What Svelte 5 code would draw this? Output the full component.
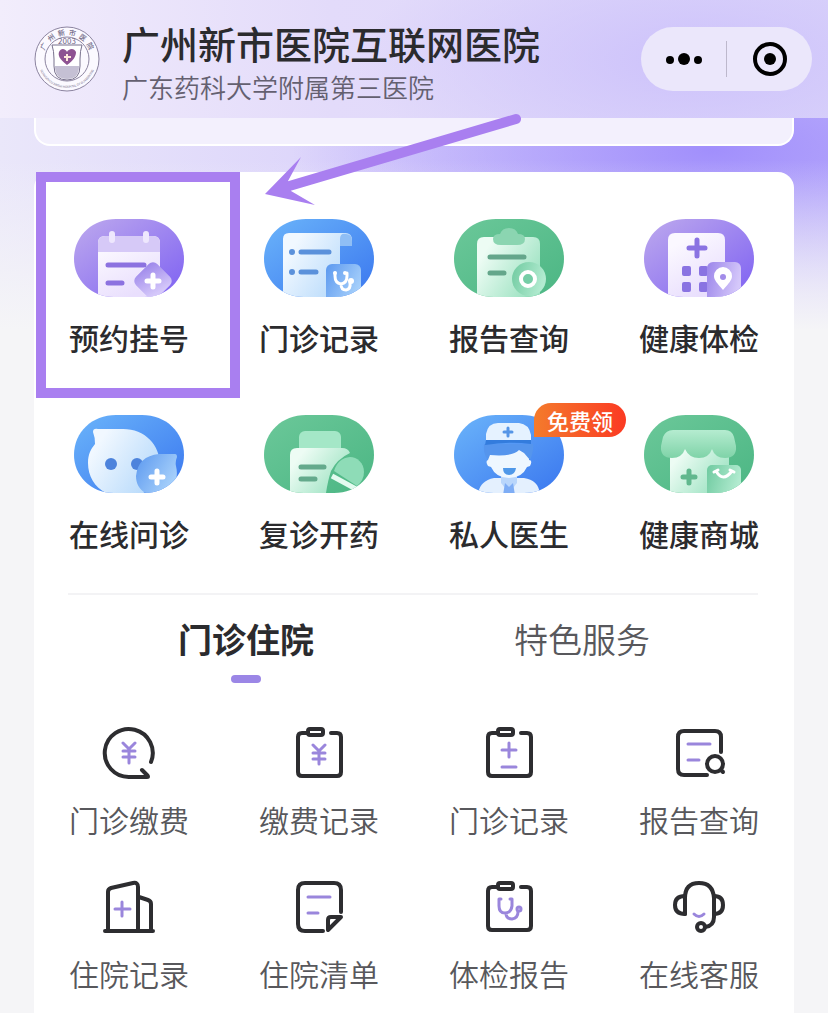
<script lang="ts">
  type Service = { name: string; icon: string; tag?: string; marked?: boolean };

  const services: Service[] = [
    { name: "预约挂号", icon: "calendar", marked: true },
    { name: "门诊记录", icon: "record" },
    { name: "报告查询", icon: "report" },
    { name: "健康体检", icon: "checkup" },
    { name: "在线问诊", icon: "chat" },
    { name: "复诊开药", icon: "medicine" },
    { name: "私人医生", icon: "doctor", tag: "免费领" },
    { name: "健康商城", icon: "shop" },
  ];

  const tabs = ["门诊住院", "特色服务"];
  let activeTab = $state(0);

  const tools: Service[] = [
    { name: "门诊缴费", icon: "pay" },
    { name: "缴费记录", icon: "bill" },
    { name: "门诊记录", icon: "visits" },
    { name: "报告查询", icon: "search" },
    { name: "住院记录", icon: "ward" },
    { name: "住院清单", icon: "list" },
    { name: "体检报告", icon: "exam" },
    { name: "在线客服", icon: "support" },
  ];
</script>

<!-- gradients shared by the service icons -->
<svg class="defs" aria-hidden="true">
  <defs>
    <clipPath id="pill">
      <path d="M0 40C0 17 18 0 42 0H68C92 0 110 17 110 40 110 60 94 78 70 78H40C16 78 0 60 0 40Z" />
    </clipPath>
    <linearGradient id="purple" x2="1" y2="1">
      <stop offset="0.1" stop-color="#b7a2ee" /><stop offset="0.9" stop-color="#8468f2" />
    </linearGradient>
    <linearGradient id="blue" x2="1" y2="1">
      <stop offset="0.1" stop-color="#66aef9" /><stop offset="0.9" stop-color="#3f7df0" />
    </linearGradient>
    <linearGradient id="green" x2="1" y2="1">
      <stop offset="0.1" stop-color="#68c697" /><stop offset="0.9" stop-color="#4fb886" />
    </linearGradient>
    <linearGradient id="whitePurple" x2="0.5" y2="1">
      <stop offset="0.2" stop-color="#fbf8ff" /><stop offset="1" stop-color="#e9dffd" />
    </linearGradient>
    <linearGradient id="whiteBlue" x2="1" y2="0.6">
      <stop offset="0.2" stop-color="#f1f8ff" /><stop offset="1" stop-color="#b9dbfb" />
    </linearGradient>
    <linearGradient id="whiteGreen" x2="1" y2="0.6">
      <stop offset="0.2" stop-color="#edfcf4" /><stop offset="1" stop-color="#9fe3c3" />
    </linearGradient>
    <linearGradient id="badgePurple" x2="1" y2="0.3">
      <stop offset="0" stop-color="#9b85ea" /><stop offset="1" stop-color="#d5c8fa" />
    </linearGradient>
    <linearGradient id="badgeBlue" x2="1" y2="0.6">
      <stop offset="0" stop-color="#5b98ef" /><stop offset="1" stop-color="#a9d2fb" />
    </linearGradient>
    <linearGradient id="badgeGreen" x2="1" y2="0.3">
      <stop offset="0" stop-color="#6fcaa0" /><stop offset="1" stop-color="#b2ebd0" />
    </linearGradient>
    <linearGradient id="awning" x2="0" y2="1">
      <stop offset="0" stop-color="#b5ecd0" /><stop offset="1" stop-color="#7fd3a8" />
    </linearGradient>
  </defs>
</svg>

{#snippet serviceIcon(icon: string)}
  <svg class="service-icon" viewBox="0 0 110 78" aria-hidden="true">
    <g clip-path="url(#pill)">
      {#if icon === "calendar"}
        <rect width="110" height="78" fill="url(#purple)" />
        <path d="M24 78V24q0-7 7-7H79q7 0 7 7V78Z" fill="url(#whitePurple)" />
        <path d="M24 33V24q0-7 7-7H79q7 0 7 7V33Z" fill="#d6c9f7" />
        <path d="M38 15V21M72 15V21" stroke="#eee7fd" stroke-width="6" stroke-linecap="round" />
        <path d="M34 46H70M34 64H48" stroke="#8c72e0" stroke-width="5" stroke-linecap="round" />
        <rect x="64" y="47" width="30" height="30" rx="6" transform="rotate(45 79 62)" fill="url(#badgePurple)" />
        <path d="M73 62H85M79 56V68" stroke="#fff" stroke-width="5" stroke-linecap="round" />
      {:else if icon === "record"}
        <rect width="110" height="78" fill="url(#blue)" />
        <path d="M19 78V20q0-6 6-6H81q7 0 7 7v5H76V78Z" fill="url(#whiteBlue)" />
        <path d="M76 27V20q0-6 6-5 6 0 6 7v5Z" fill="#8fbef5" />
        <circle cx="28" cy="33" r="3" fill="#5b91db" /><circle cx="28" cy="53" r="3" fill="#5b91db" />
        <path d="M37 33H65M37 53H52" stroke="#5b91db" stroke-width="5" stroke-linecap="round" />
        <rect x="62" y="45" width="35" height="40" rx="6" fill="url(#badgeBlue)" />
        <path d="M71 54v3q0 7 6 8 6-1 6-8v-3M77 65q0 6 5 6 5-1 4-7" fill="none" stroke="#fff" stroke-width="3" stroke-linecap="round" />
        <circle cx="71" cy="54" r="2" fill="#fff" /><circle cx="81" cy="54" r="2" fill="#fff" />
        <circle cx="87" cy="62" r="3" fill="#fff" />
      {:else if icon === "report"}
        <rect width="110" height="78" fill="url(#green)" />
        <path d="M23 78V25q0-7 7-7H79q7 0 7 7V78Z" fill="url(#whiteGreen)" />
        <path d="M39 20q0-5 7-5 2-6 9-6t9 6q7 0 7 5 0 6-8 6H47q-8 0-8-6Z" fill="#8bd5b1" />
        <path d="M36 38H70M36 54H50" stroke="#64a68b" stroke-width="5" stroke-linecap="round" />
        <circle cx="75" cy="60" r="17" fill="url(#badgeGreen)" />
        <circle cx="74" cy="60" r="7" fill="#75cda6" stroke="#fff" stroke-width="4" />
      {:else if icon === "checkup"}
        <rect width="110" height="78" fill="url(#purple)" />
        <path d="M24 78V21q0-7 7-7H74q7 0 7 7V78Z" fill="url(#whitePurple)" />
        <path d="M45 29H61M53 21V37" stroke="#8a73e2" stroke-width="5" stroke-linecap="round" />
        <g fill="#8a73e2">
          <rect x="38" y="47" width="9" height="10" rx="2" /><rect x="55" y="47" width="9" height="10" rx="2" />
          <rect x="38" y="63" width="9" height="10" rx="2" /><rect x="55" y="63" width="9" height="10" rx="2" />
        </g>
        <rect x="63" y="43" width="34" height="42" rx="6" fill="url(#badgePurple)" />
        <path d="M79 71C73 64 70 61 70 57a9 9 0 0 1 18 0C88 61 85 64 79 71Z" fill="#fff" />
        <circle cx="79" cy="58" r="3" fill="#a28ce9" />
      {:else if icon === "chat"}
        <rect width="110" height="78" fill="url(#blue)" />
        <path d="M19 17q0-4 5-3H49C71 14 86 30 86 50S72 82 50 82 14 67 14 48C14 39 17 34 21 29Q21 22 19 17Z" fill="url(#whiteBlue)" />
        <circle cx="37" cy="49" r="6" fill="#4d83dc" /><circle cx="63" cy="49" r="6" fill="#4d83dc" />
        <path d="M101 39q2 0 2 3-2 5-1 9C106 67 96 80 82 80S62 71 62 61q2-20 23-22Z" fill="url(#badgeBlue)" />
        <path d="M77 62H89M83 56V68" stroke="#fff" stroke-width="5" stroke-linecap="round" />
      {:else if icon === "medicine"}
        <rect width="110" height="78" fill="url(#green)" />
        <rect x="35" y="16" width="42" height="30" rx="6" fill="#a4e7c7" />
        <path d="M26 78V40q0-7 7-7H78q6 0 8 5-13 6-19 18-3 9-5 22Z" fill="url(#whiteGreen)" />
        <path d="M37 52H60M37 64H51" stroke="#64aa8c" stroke-width="5" stroke-linecap="round" />
        <path d="M70 56Q74 43 86 42C93 42 100 48 100 57q0 8-7 14Z" fill="#8edcb7" />
        <path d="M68 61 92 74" stroke="#e5fbf0" stroke-width="5" />
      {:else if icon === "doctor"}
        <rect width="110" height="78" fill="url(#blue)" />
        <path d="M24 80q1-14 16-17H70q15 2 16 17Z" fill="#e4f0fe" />
        <path d="M47 59H63V68L55 78 47 68Z" fill="#b9d6fb" />
        <path d="M51 68 55 72 59 68 61 80H49Z" fill="#7eadf5" />
        <path d="M34 35H75V45q4 0 1 6l-3 1Q68 63 55 63T37 52l-3-1q-3-5 0-6Z" fill="#eef7ff" />
        <path d="M30 29H79q1 7-3 16L70 38 65 35Q58 42 36 40L34 45Q29 39 30 29Z" fill="#5595ed" />
        <path d="M32 27V19Q34 8 44 8H65Q75 9 77 20V27Z" fill="#e5f2ff" />
        <path d="M32 25H77V29Q55 26 31 30Z" fill="#337cdd" />
        <path d="M50 17H58M54 13V21" stroke="#5595e6" stroke-width="3" stroke-linecap="round" />
        <path d="M49 53H62Q61 60 55 60T49 53Z" fill="#4f98e9" />
      {:else}
        <rect width="110" height="78" fill="url(#green)" />
        <path d="M26 32H85V78H26Z" fill="url(#whiteGreen)" />
        <path d="M19 22Q22 15 29 15H81Q88 15 90 22L92 31Q93 43 81 43 71 43 68 34 65 43 55 43T41 34Q38 43 28 43 16 43 17 31Z" fill="url(#awning)" />
        <path d="M39 62H51M45 56V68" stroke="#61b88e" stroke-width="5" stroke-linecap="round" />
        <rect x="63" y="50" width="34" height="35" rx="5" fill="url(#badgeGreen)" />
        <path d="M72 56q7 12 16 0M70 57l4-2M86 55l4 2" fill="none" stroke="#fff" stroke-width="3" stroke-linecap="round" />
      {/if}
    </g>
  </svg>
{/snippet}

{#snippet clipboard()}
  <path d="M14 6H9Q5 6 5 10V45Q5 49 9 49H44Q48 49 48 45V10Q48 6 44 6H38" />
  <rect x="15" y="2" width="15" height="6" rx="2" />
{/snippet}

{#snippet toolIcon(icon: string)}
  <svg class="tool-icon" viewBox="0 0 52 52" aria-hidden="true">
    {#if icon === "pay"}
      <path d="M48 35A24 24 0 1 0 26 50H44Q46 50 44 48L39 43" />
      <path class="accent" d="M20 16 26 22 32 16M26 22V36M20 24H32M20 30H32" />
    {:else if icon === "bill"}
      {@render clipboard()}
      <path class="accent" d="M20 18 26 24 32 18M26 24V37M20 26H32M20 32H32" />
    {:else if icon === "visits"}
      {@render clipboard()}
      <path class="accent" d="M19 23H33M26 16V30M19 40H33" />
    {:else if icon === "search"}
      <path d="M48 25V10Q48 4 42 4H11Q5 4 5 10V42Q5 48 11 48H34" />
      <circle cx="42" cy="37" r="8" />
      <path d="M48 43 50 45" />
      <path class="accent" d="M15 17H37M15 33H26" />
    {:else if icon === "ward"}
      <path d="M5 49V11Q5 8 8 7L30 2Q35 1 35 6V49M36 16 45 19Q48 20 48 23V49M2 50H50" />
      <path class="accent" d="M12 28H27M19 21V35" />
    {:else if icon === "list"}
      <path d="M48 31V9Q48 2 41 2H12Q5 2 5 9V43Q5 50 12 50H30" />
      <path d="M35 49V39Q35 36 38 36H48Z" />
      <path class="accent" d="M15 16H37M15 32H25" />
    {:else if icon === "exam"}
      {@render clipboard()}
      <path class="accent" d="M18 18H16V25Q16 32 22 32T29 25V18H27M23 32Q23 38 29 38 35 37 35 31" />
      <circle class="accent" cx="36" cy="28" r="2" />
    {:else}
      <path d="M12 33V17Q12 2 26 2T41 17V36Q41 45 32 46" />
      <path d="M12 15Q2 15 2 24T12 33M41 15Q50 15 50 24T41 33" />
      <circle cx="28" cy="46" r="4" />
      <path class="accent" d="M21 33Q26 38 31 33" />
    {/if}
  </svg>
{/snippet}

<div class="page">
  <header class="header">
    <svg class="logo" viewBox="0 0 66 66" aria-hidden="true">
      <defs>
        <path id="arcTop" d="M9 33A24 24 0 0 1 57 33" />
        <path id="arcBottom" d="M4 33A29 29 0 0 0 62 33" />
      </defs>
      <circle cx="33" cy="33" r="32" fill="#fbf9ff" stroke="#8c84a0" />
      <circle cx="33" cy="33" r="22" fill="none" stroke="#8c84a0" />
      <path d="M18 19H48Q46 25 46 33V40Q46 54 33 54T20 40V33Q20 25 18 19Z" fill="#fff" stroke="#77708c" />
      <path d="M21 40H45Q45 53 33 53T21 40Z" fill="#c5c0d4" />
      <path d="M33 39C25 33 24 29 25 26 27 21 32 23 33 26 34 23 40 21 42 26 42 30 40 34 33 39Z" fill="#8e5392" />
      <path d="M30 31H37M33 28V35" stroke="#ffe9dc" stroke-width="2" />
      <text class="logo-name"><textPath href="#arcTop" startOffset="50%">广&nbsp;&nbsp;州&nbsp;&nbsp;新&nbsp;&nbsp;市&nbsp;&nbsp;医&nbsp;&nbsp;院</textPath></text>
      <text class="logo-year" x="33" y="18">2003</text>
      <text class="logo-en"><textPath href="#arcBottom" startOffset="50%">GUANGZHOU XINSHI HOSPITAL OF GUANGDONG</textPath></text>
    </svg>

    <div class="titles">
      <h1>广州新市医院互联网医院</h1>
      <p>广东药科大学附属第三医院</p>
    </div>

    <div class="capsule">
      <button type="button" aria-label="更多">
        <svg viewBox="0 0 40 40">
          <circle cx="6" cy="21" r="4" /><circle cx="20" cy="20" r="6" /><circle cx="34" cy="21" r="4" />
        </svg>
      </button>
      <span class="capsule-line"></span>
      <button type="button" aria-label="关闭">
        <svg viewBox="0 0 40 40">
          <circle class="ring" cx="20" cy="20" r="15" /><circle cx="20" cy="20" r="6" />
        </svg>
      </button>
    </div>
  </header>

  <main>
    <div class="banner"></div>

    <section class="card">
      <div class="grid services">
        {#each services as service}
          <button type="button" class="item" class:marked={service.marked}>
            <span class="icon-wrapper">
              {@render serviceIcon(service.icon)}
              {#if service.tag}
                <span class="tag">{service.tag}</span>
              {/if}
            </span>
            <span class="service-name">{service.name}</span>
          </button>
        {/each}
      </div>

      <div class="tabs" role="tablist">
        {#each tabs as tab, i}
          <button
            type="button"
            role="tab"
            class="tab"
            class:active={activeTab === i}
            aria-selected={activeTab === i}
            onclick={() => (activeTab = i)}
          >
            {tab}
          </button>
        {/each}
      </div>

      <div class="grid tools">
        {#each tools as tool}
          <button type="button" class="item">
            {@render toolIcon(tool.icon)}
            <span class="tool-name">{tool.name}</span>
          </button>
        {/each}
      </div>

      <!-- pointer to the first service -->
      <svg class="arrow" viewBox="0 0 260 96" aria-hidden="true">
        <path d="M22 74 252 6" stroke="#a97ff0" stroke-width="10" stroke-linecap="round" />
        <path d="M1 81 37 44 24 68 27 78 51 92Z" fill="#a97ff0" />
      </svg>
    </section>
  </main>
</div>

<style>
  :global(body) {
    margin: 0;
    background: #f5f5f7;
  }

  .page {
    min-height: 100vh;
    display: flex;
    flex-direction: column;
    font-family: "Noto Sans CJK SC", sans-serif;
    color: #2b2b2e;
    background:
      linear-gradient(to bottom, transparent 160px, #f5f5f7 330px),
      radial-gradient(ellipse 420px 150px at 86% 150px, #a18ffc, transparent),
      linear-gradient(to right, #eae7fa, #d9d0fb 50%, #cbc1fa);
  }

  button {
    margin: 0;
    padding: 0;
    border: 0;
    background: none;
    font: inherit;
    color: inherit;
    cursor: pointer;
  }

  .defs {
    position: absolute;
    width: 0;
    height: 0;
  }

  /* ------ header ------ */
  .header {
    box-sizing: border-box;
    height: 118px;
    padding: 0 16px 0 34px;
    display: flex;
    align-items: center;
    background:
      radial-gradient(ellipse 340px 130px at 84% 60px, #cdc2fb, transparent),
      linear-gradient(to right, #f2edfc, #e3dbfa 40%, #dcd6fa);
  }

  .logo {
    width: 66px;
    height: 66px;
    margin-right: 22px;
    flex: none;
  }

  .logo text {
    text-anchor: middle;
    fill: #6f6885;
  }

  .logo-name {
    font-size: 7px;
    font-weight: 500;
  }

  .logo-year {
    font-size: 8px;
  }

  .logo-en {
    font-size: 3px;
  }

  .titles {
    flex: 1;
    padding-top: 4px;
    white-space: nowrap;
  }

  .titles h1 {
    margin: 0;
    font-size: 38px;
    line-height: 52px;
    font-weight: 500;
  }

  .titles p {
    margin: 0;
    font-size: 26px;
    line-height: 36px;
    font-weight: 350;
    color: #646070;
  }

  .capsule {
    width: 171px;
    height: 64px;
    display: flex;
    align-items: center;
    border-radius: 32px;
    background: #ebe7fb;
  }

  .capsule button {
    flex: 1;
    display: flex;
    justify-content: center;
  }

  .capsule svg {
    width: 40px;
    height: 40px;
  }

  .ring {
    fill: none;
    stroke: #000;
    stroke-width: 4;
  }

  .capsule-line {
    width: 1px;
    height: 36px;
    background: #bdb8cc;
  }

  /* ------ content ------ */
  main {
    flex: 1;
    padding: 0 34px;
    display: flex;
    flex-direction: column;
    gap: 26px;
  }

  .banner {
    box-sizing: border-box;
    height: 28px;
    border: 2px solid #fff;
    border-top: 0;
    border-radius: 0 0 16px 16px;
    background: #f3f0fd;
  }

  .card {
    position: relative;
    flex: 1;
    padding-bottom: 12px;
    border-radius: 16px 16px 0 0;
    background: #fff;
  }

  .grid {
    display: grid;
    grid-template-columns: repeat(4, 1fr);
  }

  .item {
    position: relative;
    display: flex;
    flex-direction: column;
    align-items: center;
    gap: 18px;
  }

  .services {
    padding-top: 47px;
    row-gap: 56px;
  }

  .icon-wrapper {
    position: relative;
    display: block;
  }

  .service-icon {
    display: block;
    width: 110px;
    height: 78px;
  }

  .service-name,
  .tool-name {
    font-size: 30px;
    line-height: 44px;
  }

  .service-name {
    font-weight: 500;
  }

  .tool-name {
    font-weight: 350;
    color: #58585c;
  }

  .tag {
    position: absolute;
    top: -12px;
    left: 80px;
    width: 92px;
    border-radius: 17px 17px 17px 0;
    background: linear-gradient(to right, #f47b2c, #fb3a23);
    color: #fff;
    font-size: 22px;
    line-height: 34px;
    font-weight: 500;
    text-align: center;
    white-space: nowrap;
  }

  .marked::after {
    content: "";
    position: absolute;
    inset: -47px -16px -39px 2px;
    border: 10px solid #a97ff0;
  }

  .arrow {
    position: absolute;
    top: -59px;
    left: 230px;
    width: 260px;
    height: 96px;
    fill: none;
    pointer-events: none;
  }

  /* ------ tabs ------ */
  .tabs {
    margin: 38px 36px 0 34px;
    padding: 20px 8px 0 10px;
    display: flex;
    border-top: 2px solid #f3f3f5;
  }

  .tab {
    flex: 1;
    display: flex;
    flex-direction: column;
    align-items: center;
    gap: 12px;
    font-size: 34px;
    line-height: 48px;
    font-weight: 350;
    color: #58585c;
  }

  .tab::after {
    content: "";
    width: 30px;
    height: 8px;
    border-radius: 4px;
  }

  .tab.active {
    font-weight: 700;
    color: #2b2b2e;
  }

  .tab.active::after {
    background: #9b86e6;
  }

  /* ------ tools ------ */
  .tools {
    padding-top: 44px;
    row-gap: 40px;
  }

  .tool-icon {
    width: 52px;
    height: 52px;
    overflow: visible;
    fill: none;
    stroke: #2d2d30;
    stroke-width: 4;
    stroke-linecap: round;
    stroke-linejoin: round;
  }

  .accent {
    stroke: #9a86dc;
    stroke-width: 3;
  }
</style>
